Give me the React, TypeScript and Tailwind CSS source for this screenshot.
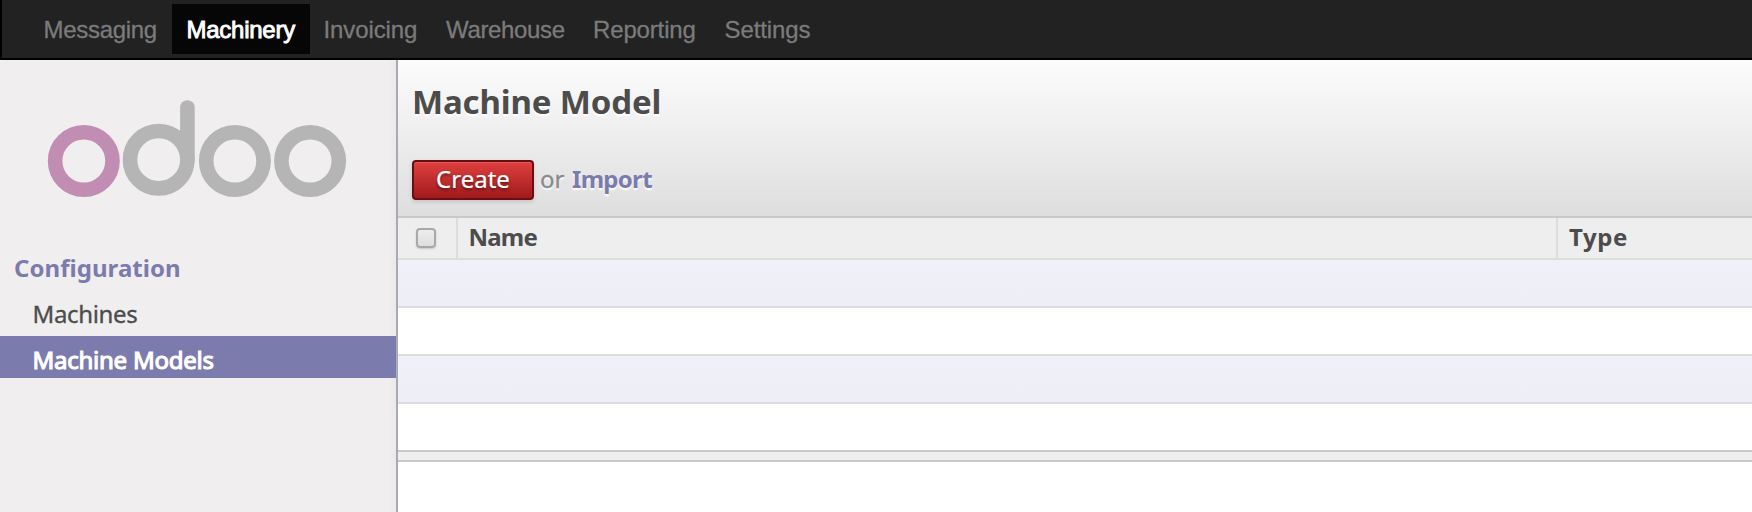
import React from "react";

const menu = [
  { label: "Messaging", cls: "w-[143px] pl-[14.5px] tracking-[-0.3px]" },
  { label: "Machinery", cls: "w-[138px] pl-[14.5px] tracking-[-0.25px] text-white bg-[#060606] [-webkit-text-stroke:0.9px_white]" },
  { label: "Invoicing", cls: "w-[122px] pl-[13.5px] tracking-[-0.1px]" },
  { label: "Warehouse", cls: "w-[147px] pl-[14px] tracking-[-0.35px]" },
  { label: "Reporting", cls: "w-[132px] pl-[14px] tracking-[-0.15px]" },
  { label: "Settings", cls: "w-[120px] pl-[13.5px] tracking-[-0.1px]" },
];

function TopBar() {
  return (
    <nav className="flex h-[60px] shrink-0 border-b-2 border-l-2 border-black bg-[#222222] pt-1 pl-[27px] font-['Liberation_Sans',sans-serif] text-[24px] leading-[50px] text-[#7b7b7b] [-webkit-text-stroke:0.3px_#7b7b7b]">
      {menu.map((m) => (
        <a key={m.label} className={"block h-[50px] whitespace-nowrap pt-px " + m.cls}>
          {m.label}
        </a>
      ))}
    </nav>
  );
}

function Logo() {
  return (
    <svg width="300" height="98" viewBox="47 100 300 98" fill="none" strokeWidth="14.6" className="ml-[47px] block">
      <circle cx="83.8" cy="161" r="28.7" stroke="#c18db3" />
      <g stroke="#b5b5b5">
        <circle cx="158.7" cy="159.7" r="28.7" />
        <path d="M187.4 159.7V107.5" strokeLinecap="round" />
        <circle cx="234.9" cy="161" r="28.7" />
        <circle cx="310.1" cy="161" r="28.7" />
      </g>
    </svg>
  );
}

function Sidebar() {
  return (
    <aside className="h-full w-[398px] shrink-0 border-r-2 border-[#a9a9b2] bg-[#f0eeee] bg-[linear-gradient(to_left,#ebe9eb_0px,#f0eeee_8px)] pt-10 text-[24px] leading-[30px]">
      <Logo />
      <h2 className="mt-[55px] pl-[14px] font-bold tracking-[0.05px] text-[#7c7bad]">Configuration</h2>
      <ul>
        <li className="mt-[16px] h-[37px] pl-[32.5px] tracking-[-0.35px] text-[#4c4c4c] [-webkit-text-stroke:0.3px_#4c4c4c]">Machines</li>
        <li className="h-[42px] bg-[#7c7bad] pt-[9px] pl-[32.5px] tracking-[-0.25px] text-white [-webkit-text-stroke:1.1px_white]">
          Machine Models
        </li>
      </ul>
    </aside>
  );
}

function Header() {
  return (
    <header className="h-[158px] border-b-2 border-[#c8c8c8] bg-gradient-to-b from-[#fcfcfc] to-[#dedede] pl-[14px] pt-[22px]">
      <h1 className="text-[33px] leading-[40px] font-bold tracking-[-0.15px] text-[#4c4c4c] [text-shadow:0_2px_2px_white]">Machine Model</h1>
      <div className="mt-[38px] flex h-10 text-[24px] leading-[38px]">
        <button className="h-10 w-[122px] rounded-[4px] border-2 border-[#6b0d10] bg-gradient-to-b from-[#df3f3f] to-[#a21a1d] pb-[2px] text-center leading-[34px] text-white shadow-[0_2px_4px_rgba(0,0,0,0.12),inset_0_1px_1px_rgba(255,255,255,0.15)] [text-shadow:0_2px_3px_rgba(0,0,0,0.5)] [-webkit-text-stroke:0.2px_white]">
          Create
        </button>
        <span className="ml-[6px] w-8 text-[#8a8a8a] [text-shadow:0_2px_2px_white] [-webkit-text-stroke:0.3px_#8a8a8a]">or</span>
        <a className="font-bold tracking-[-0.7px] text-[#7c7bad] [text-shadow:0_2px_2px_white]">Import</a>
      </div>
    </header>
  );
}

function Table() {
  return (
    <div className="w-full">
      <div className="flex h-[42px] border-b-2 border-[#dddddd] bg-[#eeeeee] text-[24px] leading-[38px] font-bold text-[#4c4c4c]">
        <div className="w-[60px] border-r-2 border-[#dddddd] pt-[10px] pl-[18px]">
          <div className="h-5 w-5 rounded-[4px] border-2 border-[#a8a8a8] bg-gradient-to-b from-[#ededed] to-[#dedede] shadow-[0_1px_2px_rgba(0,0,0,0.15)]" />
        </div>
        <div className="w-[1100px] border-r-2 border-[#dddddd] pl-[10.5px] tracking-[-0.8px]">Name</div>
        <div className="pl-[11px] tracking-[0.6px]">Type</div>
      </div>
      <div className="h-12 border-b-2 border-[#dddddd] bg-gradient-to-b from-[#f0f0fa] to-[#eeeef6]" />
      <div className="h-12 border-b-2 border-[#dddddd] bg-white" />
      <div className="h-12 border-b-2 border-[#dddddd] bg-gradient-to-b from-[#f0f0fa] to-[#eeeef6]" />
      <div className="h-[46px] bg-white" />
      <div className="h-3 border-y-2 border-[#c8c8c8] bg-[#eeeeee]" />
    </div>
  );
}

export default function App() {
  return (
    <div className="flex h-[512px] w-[1752px] flex-col overflow-hidden bg-white font-['Noto_Sans',sans-serif]">
      <TopBar />
      <div className="flex min-h-0 flex-1">
        <Sidebar />
        <main className="min-w-0 flex-1">
          <Header />
          <Table />
        </main>
      </div>
    </div>
  );
}
